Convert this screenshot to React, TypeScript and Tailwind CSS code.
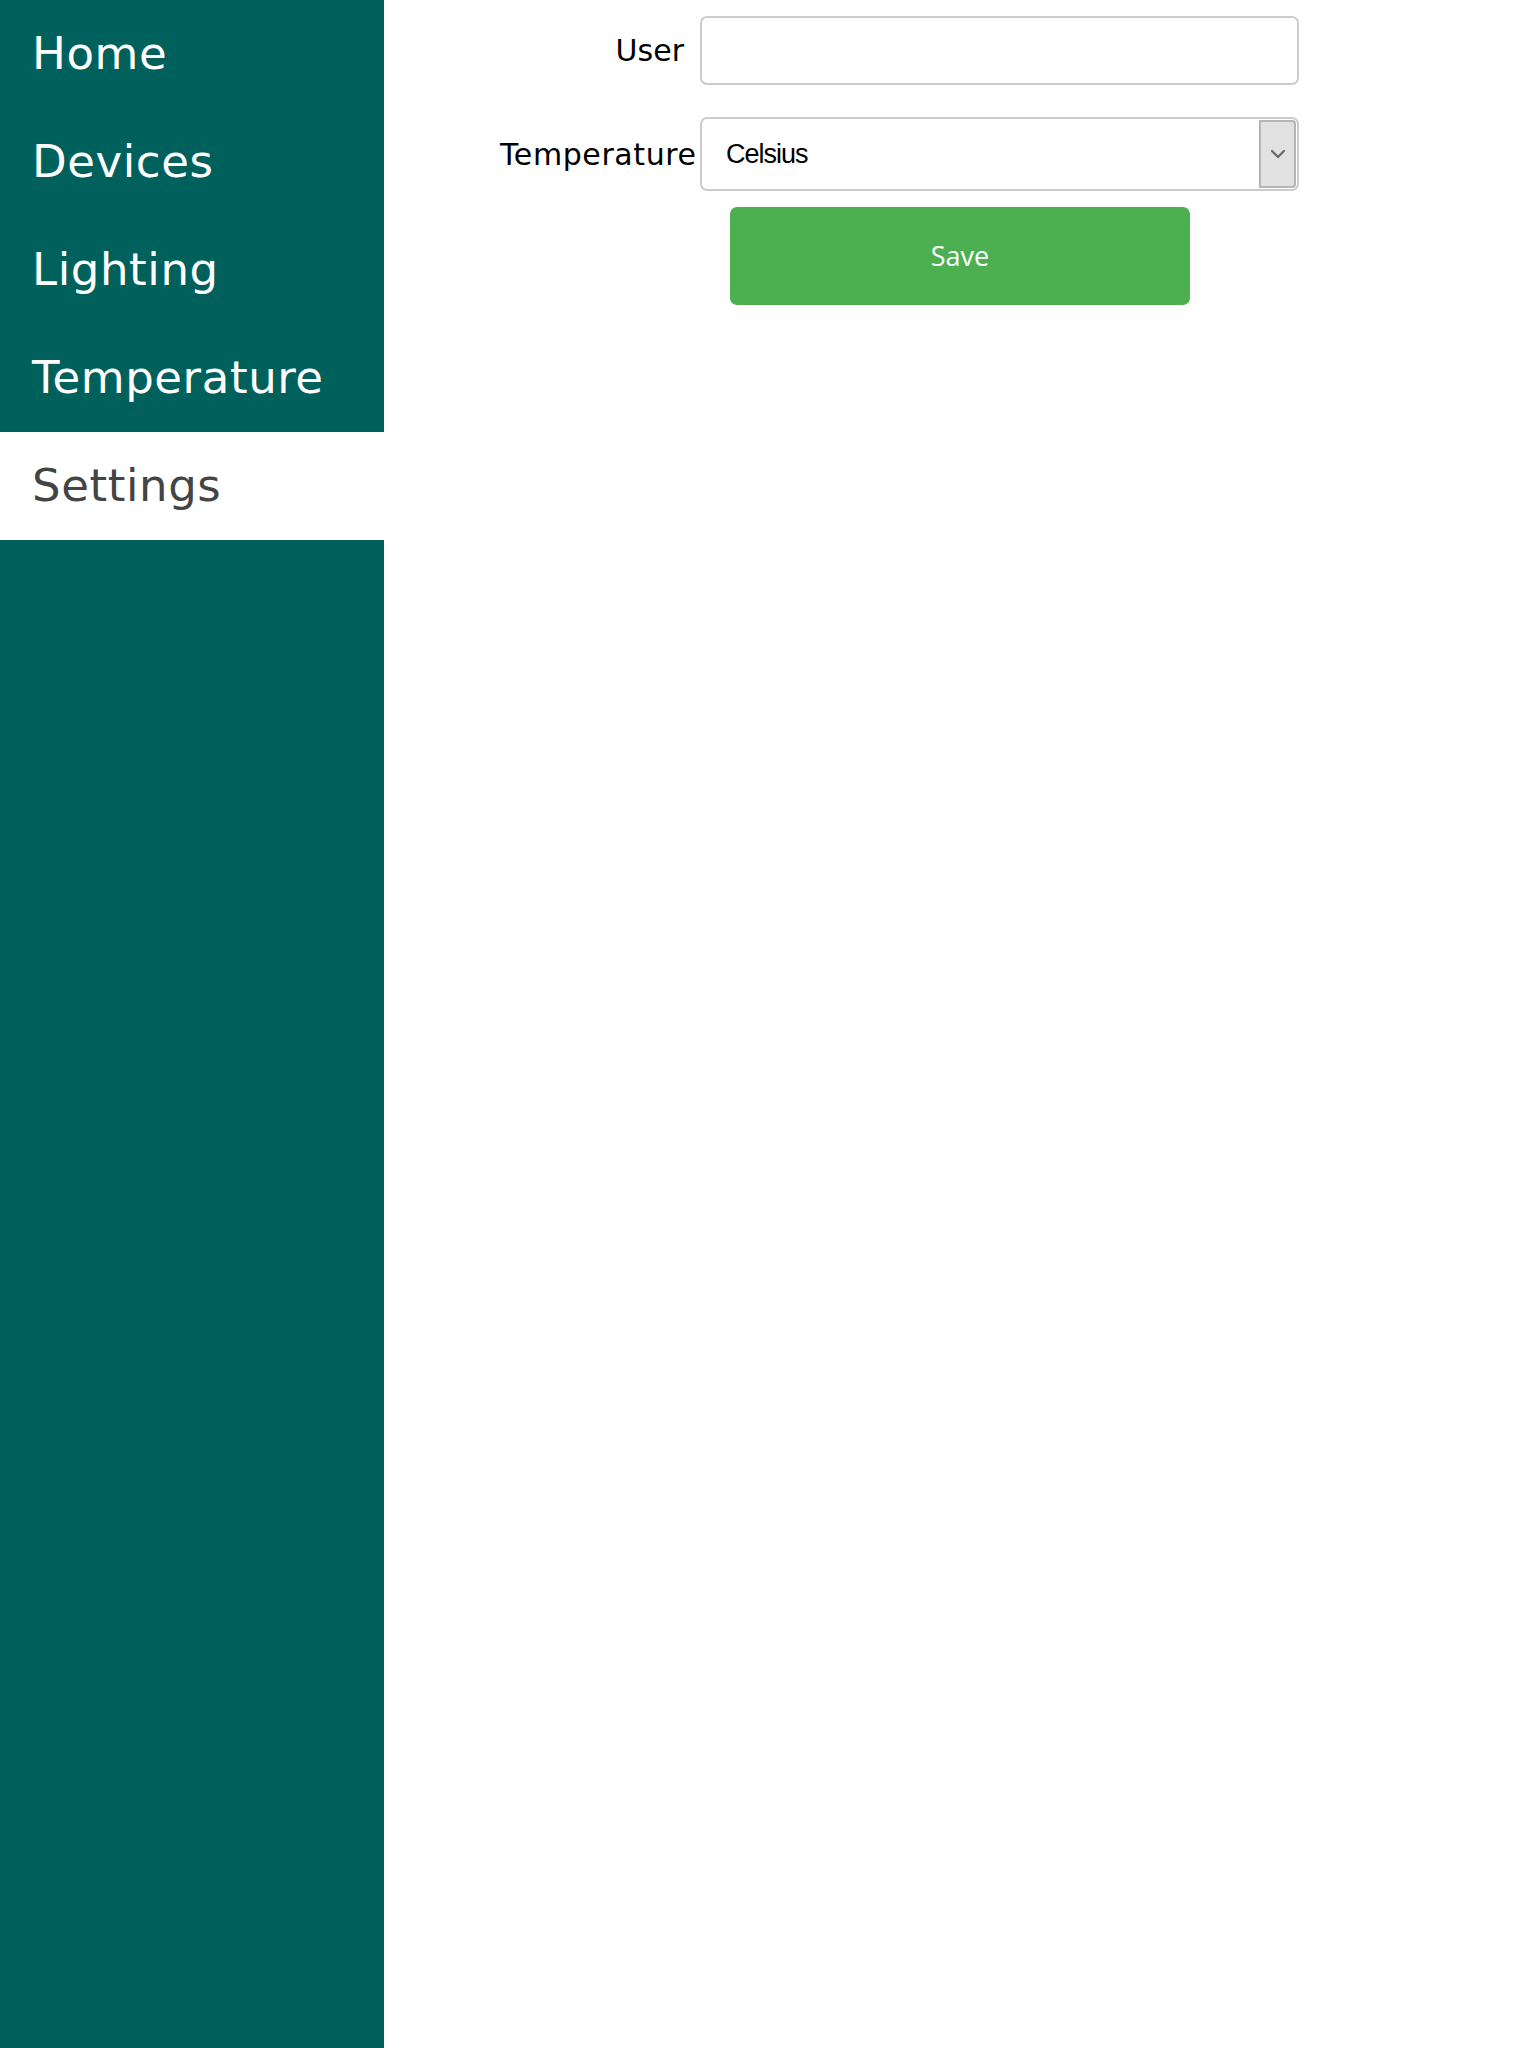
import React from "react";

const navItems = ["Home", "Devices", "Lighting", "Temperature", "Settings"];

export default function App() {
  const active = "Settings";
  return (
    <div className="flex min-h-[2048px] w-full bg-white">
      <aside className="w-[384px] shrink-0 bg-[#00605c]">
        <nav className="flex flex-col">
          {navItems.map((item) =>
            item === active ? (
              <div
                key={item}
                className="flex h-[108px] items-center bg-white px-[32px] text-[45px] tracking-[0.6px] text-[#444444] [font-family:'DejaVu_Sans',sans-serif]"
              >
                {item}
              </div>
            ) : (
              <div
                key={item}
                className="flex h-[108px] items-center px-[32px] text-[45px] tracking-[0.6px] text-white [font-family:'DejaVu_Sans',sans-serif]"
              >
                {item}
              </div>
            )
          )}
        </nav>
      </aside>
      <main className="flex-1 pl-[116px] pt-[16px]">
        <div className="flex flex-col">
          <div className="flex items-center">
            <label className="w-[200px] shrink-0 whitespace-nowrap pr-[16px] text-right text-[30px] text-black [font-family:'DejaVu_Sans',sans-serif]">
              User
            </label>
            <div className="h-[69px] w-[599px] rounded-[7px] border-2 border-[#cccccc] bg-white" />
          </div>
          <div className="mt-[32px] flex items-center">
            <label className="w-[200px] shrink-0 whitespace-nowrap pr-[16px] text-left text-[30px] tracking-[0.6px] text-black [font-family:'DejaVu_Sans',sans-serif]">
              Temperature
            </label>
            <div className="flex h-[74px] w-[599px] items-stretch rounded-[7px] border-2 border-[#cccccc] bg-white p-[1px]">
              <div className="flex flex-1 items-center pl-[23px] text-[27px] tracking-[-1px] text-black [font-family:'Liberation_Sans',sans-serif]">
                Celsius
              </div>
              <div className="flex w-[37px] items-center justify-center rounded-r-[4px] border-2 border-[#b5b5b5] bg-[#e1e1e1]">
                <svg width="16" height="10" viewBox="0 0 16 10" fill="none">
                  <path d="M2 2 L8 8 L14 2" stroke="#666666" strokeWidth="2.2" strokeLinecap="round" strokeLinejoin="round" />
                </svg>
              </div>
            </div>
          </div>
          <div className="mt-[16px] flex">
            <button className="ml-[230px] h-[98px] w-[460px] rounded-[7px] bg-[#4caf50] text-[27px] text-white [font-family:'Open_Sans',sans-serif]">
              Save
            </button>
          </div>
        </div>
      </main>
    </div>
  );
}
